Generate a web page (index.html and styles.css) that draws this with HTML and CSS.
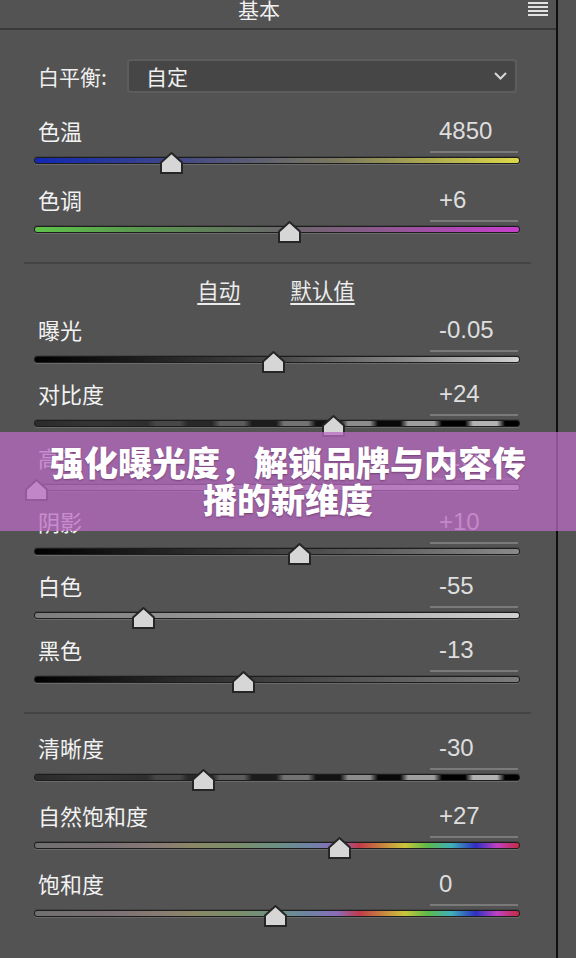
FILE: index.html
```html
<!DOCTYPE html>
<html lang="zh-CN">
<head>
<meta charset="utf-8">
<title>基本</title>
<link rel="stylesheet" href="styles.css">
</head>
<body>
<div class="app">
  <div class="panel">
    <header class="head">
      <div class="title">基本</div>
      <div class="menu"><i></i><i></i><i></i><i></i></div>
    </header>

    <div class="wb">
      <span class="wb-label">白平衡:</span>
      <div class="select">
        <span>自定</span>
        <svg class="chev" width="13" height="8" viewBox="0 0 13 8"><polyline points="1,1 6.5,6.5 12,1" fill="none" stroke="#d8d8d8" stroke-width="2"/></svg>
      </div>
    </div>

    <section class="group g-top">
      <div class="slider">
        <div class="slider-head"><span class="label">色温</span><span class="value">4850</span></div>
        <div class="track t-temp"><svg class="thumb" style="left:125px" width="23" height="22" viewBox="0 0 23 22"><polygon points="1,10.5 11.5,1 22,10.5 22,21 1,21"/></svg></div>
      </div>
      <div class="slider">
        <div class="slider-head"><span class="label">色调</span><span class="value">+6</span></div>
        <div class="track t-tint"><svg class="thumb" style="left:243px" width="23" height="22" viewBox="0 0 23 22"><polygon points="1,10.5 11.5,1 22,10.5 22,21 1,21"/></svg></div>
      </div>
    </section>

    <hr class="sep sep-1">

    <div class="links"><a href="#">自动</a><a href="#">默认值</a></div>

    <section class="group g-tone">
      <div class="slider">
        <div class="slider-head"><span class="label">曝光</span><span class="value">-0.05</span></div>
        <div class="track t-expo"><svg class="thumb" style="left:227px" width="23" height="22" viewBox="0 0 23 22"><polygon points="1,10.5 11.5,1 22,10.5 22,21 1,21"/></svg></div>
      </div>
      <div class="slider">
        <div class="slider-head"><span class="label">对比度</span><span class="value">+24</span></div>
        <div class="track t-stripe"><svg class="thumb" style="left:287px" width="23" height="22" viewBox="0 0 23 22"><polygon points="1,10.5 11.5,1 22,10.5 22,21 1,21"/></svg></div>
      </div>
      <div class="slider">
        <div class="slider-head"><span class="label">高光</span><span class="value">-100</span></div>
        <div class="track t-high"><svg class="thumb" style="left:-10px" width="23" height="22" viewBox="0 0 23 22"><polygon points="1,10.5 11.5,1 22,10.5 22,21 1,21"/></svg></div>
      </div>
      <div class="slider">
        <div class="slider-head"><span class="label">阴影</span><span class="value">+10</span></div>
        <div class="track t-dark"><svg class="thumb" style="left:253px" width="23" height="22" viewBox="0 0 23 22"><polygon points="1,10.5 11.5,1 22,10.5 22,21 1,21"/></svg></div>
      </div>
      <div class="slider">
        <div class="slider-head"><span class="label">白色</span><span class="value">-55</span></div>
        <div class="track t-white"><svg class="thumb" style="left:97px" width="23" height="22" viewBox="0 0 23 22"><polygon points="1,10.5 11.5,1 22,10.5 22,21 1,21"/></svg></div>
      </div>
      <div class="slider">
        <div class="slider-head"><span class="label">黑色</span><span class="value">-13</span></div>
        <div class="track t-black"><svg class="thumb" style="left:197px" width="23" height="22" viewBox="0 0 23 22"><polygon points="1,10.5 11.5,1 22,10.5 22,21 1,21"/></svg></div>
      </div>
    </section>

    <hr class="sep sep-2">

    <section class="group g-bottom">
      <div class="slider">
        <div class="slider-head"><span class="label">清晰度</span><span class="value">-30</span></div>
        <div class="track t-stripe"><svg class="thumb" style="left:157px" width="23" height="22" viewBox="0 0 23 22"><polygon points="1,10.5 11.5,1 22,10.5 22,21 1,21"/></svg></div>
      </div>
      <div class="slider">
        <div class="slider-head"><span class="label">自然饱和度</span><span class="value">+27</span></div>
        <div class="track t-sat"><svg class="thumb" style="left:293px" width="23" height="22" viewBox="0 0 23 22"><polygon points="1,10.5 11.5,1 22,10.5 22,21 1,21"/></svg></div>
      </div>
      <div class="slider">
        <div class="slider-head"><span class="label">饱和度</span><span class="value">0</span></div>
        <div class="track t-sat"><svg class="thumb" style="left:229px" width="23" height="22" viewBox="0 0 23 22"><polygon points="1,10.5 11.5,1 22,10.5 22,21 1,21"/></svg></div>
      </div>
    </section>
  </div>

  <div class="banner">强化曝光度，解锁品牌与内容传播的新维度</div>
</div>
</body>
</html>
```

FILE: styles.css
```css
* { box-sizing: border-box; }

html, body {
  margin: 0;
  padding: 0;
  background: #535353;
  overflow: hidden;
}

body {
  font-family: "Noto Sans CJK SC", "Noto Sans", sans-serif;
  color: #efefef;
}

.app {
  position: relative;
  width: 576px;
  height: 958px;
}

.panel {
  width: 558px;
  height: 958px;
  border-right: 2px solid #0f0f0f;
}

/* header */
.head {
  display: flex;
  align-items: flex-start;
  height: 30px;
  padding-right: 8px;
  border-bottom: 2px solid #3a3a3a;
}

.title {
  flex: 1;
  text-align: center;
  font-size: 21px;
  line-height: 22px;
  margin-top: -2px;
  color: #f0f0f0;
}

.menu {
  display: flex;
  flex-direction: column;
  gap: 2px;
  width: 20px;
  margin-left: 10px;
  margin-top: 2px;
}

.menu i {
  display: block;
  height: 2px;
  background: #e2e2e2;
}

/* white balance */
.wb {
  display: flex;
  align-items: center;
  margin-top: 29px;
  padding-left: 38px;
}

.wb-label {
  width: 89px;
  font-size: 21px;
  line-height: 34px;
}

.select {
  display: flex;
  align-items: center;
  justify-content: space-between;
  width: 390px;
  height: 34px;
  padding: 0 8px 0 17px;
  background: #464646;
  border: 2px solid #5d5d5d;
  border-radius: 4px;
  font-size: 21px;
  color: #f0f0f0;
}

/* groups */
.group {
  display: flex;
  flex-direction: column;
}

.g-top { margin-top: 20px; gap: 18px; }
.g-tone { margin-top: 10px; gap: 13px; }
.g-bottom { margin-top: 16px; gap: 17px; }

.sep {
  margin: 0 25px 0 24px;
  border: 0;
  height: 2px;
  background: #444444;
}

.sep-1 { margin-top: 29px; }
.sep-2 { margin-top: 29px; }

.links {
  display: flex;
  justify-content: center;
  gap: 50px;
  margin-top: 14px;
  height: 24px;
  line-height: 24px;
  font-size: 21.5px;
  padding-right: 4px;
}

.links a {
  color: #ececec;
  text-decoration: underline;
  text-decoration-thickness: 1.5px;
  text-underline-offset: 4px;
}

/* slider */
.slider {
  padding: 0 36px 0 34px;
}

.slider-head {
  display: flex;
  justify-content: space-between;
  align-items: flex-start;
  height: 40px;
}

.label {
  padding-left: 4px;
  font-size: 22px;
  line-height: 35px;
  color: #f2f2f2;
}

.value {
  width: 88px;
  height: 40px;
  margin-right: 2px;
  padding-left: 9px;
  border-bottom: 2px solid #7a7a7a;
  font-family: "Liberation Sans", Arial, sans-serif;
  font-size: 24px;
  line-height: 36px;
  color: #dedede;
}

.track {
  position: relative;
  margin-top: 4px;
  height: 7px;
  border: 1px solid #1d1d1d;
  border-radius: 3px;
  box-shadow: 0 1px 0 rgba(255, 255, 255, 0.14), 0 -1px 0 rgba(0, 0, 0, 0.18);
}

.thumb {
  position: absolute;
  top: -6px;
  display: block;
}

.thumb polygon {
  fill: #d6d6d6;
  stroke: #262626;
  stroke-width: 2;
  stroke-linejoin: miter;
}

/* track fills */
.t-temp {
  background: linear-gradient(to right, #1327b2 0%, #23359f 12%, #404688 28%, #5d5e72 45%, #7a785e 62%, #a9a651 80%, #dcd84b 100%);
}

.t-tint {
  background: linear-gradient(to right, #5ec449 0%, #5a9650 22%, #627a5e 40%, #6c666c 52%, #8a5a8c 70%, #b048b6 88%, #c83fcc 100%);
}

.t-expo {
  background: linear-gradient(to right, #000 0%, #222 25%, #474747 50%, #8a8a8a 78%, #d2d2d2 100%);
}

.t-high {
  background: linear-gradient(to right, #6a6a6a 0%, #9a9a9a 50%, #cccccc 100%);
}

.t-dark {
  background: linear-gradient(to right, #000 0%, #2e2e2e 35%, #5d5d5d 70%, #8a8a8a 100%);
}

.t-white {
  background: linear-gradient(to right, #7c7c7c 0%, #a0a0a0 50%, #cfcfcf 100%);
}

.t-black {
  background: linear-gradient(to right, #000 0%, #2b2b2b 30%, #4e4e4e 60%, #7c7c7c 100%);
}

.t-stripe {
  background: linear-gradient(to right,
    #2b2b2b 0px, #353535 60px, #2e2e2e 112px,
    #474747 121px, #474747 145px,
    #282828 153px, #282828 177px,
    #5c5c5c 185px, #5c5c5c 209px,
    #1c1c1c 217px, #1c1c1c 241px,
    #737373 249px, #737373 273px,
    #121212 281px, #121212 305px,
    #8c8c8c 313px, #8c8c8c 335px,
    #080808 343px, #080808 365px,
    #9e9e9e 373px, #9e9e9e 399px,
    #000 407px, #000 430px,
    #b2b2b2 438px, #b2b2b2 462px,
    #000 470px, #000 486px);
}

.t-sat {
  background: linear-gradient(to right,
    #707070 0%, #7a7075 15%, #887a74 25%, #8a8766 33%, #7a8f6a 42%,
    #6b8f88 51%, #6f82a6 57%, #8a6ab8 62.5%, #c13b4a 67%, #c8963c 73%,
    #c9c63c 76.5%, #5db948 81%, #3fb0b8 86%, #2d30c2 91%, #c141c1 95.5%, #c22b42 100%);
}

/* overlay banner */
.banner {
  position: absolute;
  top: 432px;
  left: 0;
  right: 0;
  height: 99px;
  padding: 11px 40px 14px;
  background: rgba(186, 107, 194, 0.75);
  text-align: center;
  font-family: "Noto Sans CJK SC", sans-serif;
  font-weight: 900;
  font-size: 34px;
  line-height: 37px;
  color: #ffffff;
  text-shadow: 0 1px 2px rgba(60, 20, 60, 0.45);
}
```
